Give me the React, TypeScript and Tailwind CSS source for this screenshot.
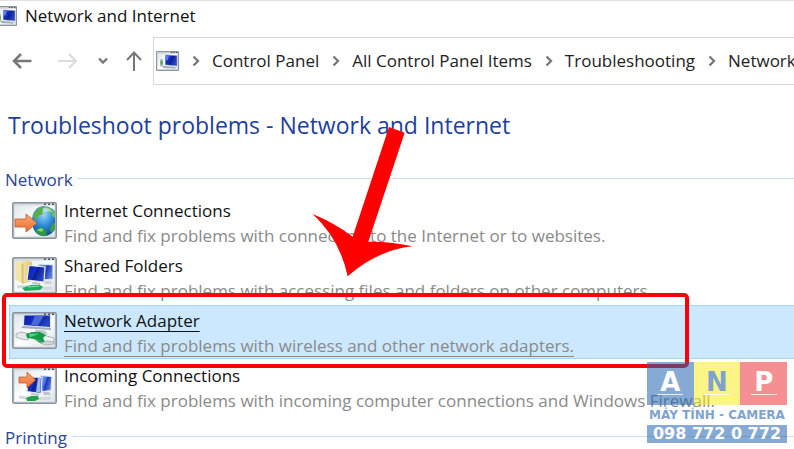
import React from "react";

type IconKind = "internet" | "folders" | "adapter" | "incoming";

interface Troubleshooter {
  title: string;
  description: string;
  icon: IconKind;
  selected?: boolean;
}

const troubleshooters: Troubleshooter[] = [
  {
    title: "Internet Connections",
    description:
      "Find and fix problems with connecting to the Internet or to websites.",
    icon: "internet",
  },
  {
    title: "Shared Folders",
    description:
      "Find and fix problems with accessing files and folders on other computers.",
    icon: "folders",
  },
  {
    title: "Network Adapter",
    description:
      "Find and fix problems with wireless and other network adapters.",
    icon: "adapter",
    selected: true,
  },
  {
    title: "Incoming Connections",
    description:
      "Find and fix problems with incoming computer connections and Windows Firewall.",
    icon: "incoming",
  },
];

const breadcrumbs = [
  "Control Panel",
  "All Control Panel Items",
  "Troubleshooting",
  "Network",
];

// shared gradients, referenced by every icon below
const IconDefs = () => (
  <svg className="absolute h-0 w-0" aria-hidden="true">
    <defs>
      <linearGradient id="pane" x1="0" y1="0" x2="1" y2="1">
        <stop offset="0" stopColor="#dfe6ea" />
        <stop offset="0.5" stopColor="#ffffff" />
        <stop offset="1" stopColor="#dde5ea" />
      </linearGradient>
      <linearGradient id="screen" x1="0" y1="0" x2="1" y2="0.4">
        <stop offset="0" stopColor="#0d1fa0" />
        <stop offset="0.5" stopColor="#1530c8" />
        <stop offset="0.56" stopColor="#0c1c8e" />
        <stop offset="1" stopColor="#2745c8" />
      </linearGradient>
      <linearGradient id="screenLight" x1="0" y1="0" x2="1" y2="0.4">
        <stop offset="0" stopColor="#8fb0f2" />
        <stop offset="0.5" stopColor="#4a70e0" />
        <stop offset="0.6" stopColor="#1c36b8" />
        <stop offset="1" stopColor="#5c7fe0" />
      </linearGradient>
      <linearGradient id="orange" x1="0" y1="0" x2="0" y2="1">
        <stop offset="0" stopColor="#fbaa6c" />
        <stop offset="1" stopColor="#ea6c34" />
      </linearGradient>
      <linearGradient id="folder" x1="0" y1="0" x2="1" y2="0">
        <stop offset="0" stopColor="#f6e8b0" />
        <stop offset="1" stopColor="#dcc578" />
      </linearGradient>
      <radialGradient id="globe" cx="0.5" cy="0.25" r="0.8">
        <stop offset="0" stopColor="#a5dcf8" />
        <stop offset="0.5" stopColor="#2f8fd8" />
        <stop offset="1" stopColor="#0c3f98" />
      </radialGradient>
    </defs>
  </svg>
);

const WindowFrame = () => (
  <>
    <rect x="0.8" y="0.8" width="43.4" height="35.4" rx="1.5" fill="#d3d9dd" stroke="#8a939b" strokeWidth="1.6" />
    <rect x="2.5" y="3.5" width="40" height="31" fill="url(#pane)" />
    <path d="M32 2.2h2M36 2.2h2M40 2.2h2" stroke="#4b555e" strokeWidth="1.4" />
  </>
);

const ItemIcon = ({ kind }: { kind: IconKind }) => (
  <svg viewBox="0 0 45 37" className="h-[37px] w-[45px] shrink-0" aria-hidden="true">
    <WindowFrame />
    {kind === "internet" && (
      <>
        <path d="M32 4c7 0 11 5 11 6v17c-2 4-6 7-11 7-7 0-12-6-12-15S25 4 32 4z" fill="url(#globe)" />
        <path d="M21 14c2-6 6-9 11-10l1 2-2 2 2 2-3 3-3 0-2 4-2 1z" fill="#5cae4c" />
        <path d="M34 5c4 0 7 3 9 6v5l-3-2 0-3-4-1z" fill="#6cbd5c" />
        <path d="M23 28l6-3 6 4-1 5c-5 0-9-2-11-6z" fill="#2c9a38" />
        <path d="M25 28l4-2 3 2-3 2z" fill="#7fd07a" />
        <path d="M40 22l3-1v6l-4 4-1-4z" fill="#3ba246" />
        <path d="M31 6c4-1 7 0 9 4-4-1-7 0-10 2z" fill="#e6f7ff" opacity="0.5" />
        <path d="M3 17h11v-5l11 9-11 9v-5H3z" fill="url(#orange)" stroke="#c15a30" strokeWidth="0.8" />
      </>
    )}
    {kind === "folders" && (
      <>
        <path d="M9 5l4-2 7 2v19l-9 3z" fill="url(#folder)" />
        <path d="M3.5 4l6 2v20l-6-3z" fill="#f3e5a6" />
        <path d="M9.5 6l2 1v20l-2-1z" fill="#d8bf70" />
        <path d="M26 7l15 1v14l-12 1z" fill="url(#screenLight)" stroke="#dfe5ea" strokeWidth="1.2" />
        <path d="M33 24l6 0 1 3-8 0z" fill="#ccd3d8" />
        <path d="M17 8.5l16 1.5-1 15-17-2z" fill="url(#screen)" stroke="#e4e9ee" strokeWidth="1.2" />
        <path d="M21 25l7 1 0 2-9-1z" fill="#b9c2c9" />
        <path d="M5 30c10-2 22 3 35 1" fill="none" stroke="#d3dadd" strokeWidth="3" />
        <path d="M10 31l9-3h9l3 2-3 3-15 1z" fill="#1fae60" />
        <path d="M16 30l11-1" stroke="#84e2a8" strokeWidth="1.2" />
      </>
    )}
    {kind === "adapter" && (
      <>
        <path d="M11 3.5h28v13l-28-2z" fill="#e3e8ed" />
        <path d="M12.5 3.5h25.5l0 11.5-26-2z" fill="url(#screen)" />
        <path d="M23 3.5h9l-6 10-7-0.5z" fill="#4a68d8" />
        <path d="M11 14l28 2v2l-30-2z" fill="#a3adb6" />
        <path d="M23 17.5l10 1 3 4-13-2z" fill="#bcc5cc" />
        <path d="M4 22l5-2 9 2-2 6-7-1-5-2z" fill="#e3e8e8" stroke="#9da6a8" strokeWidth="0.8" />
        <path d="M27 22l15 4v4l-5 2-11-4z" fill="#eef1f1" stroke="#9da6a8" strokeWidth="0.8" />
        <path d="M14 22l6-2 8 0 6 3-3 3 2 4-5 1-6-4-7-1z" fill="#129a48" />
        <path d="M17 22l9 0-8 3zM22 27l7 2" fill="#5ccd84" stroke="#5ccd84" strokeWidth="0.6" />
        <path d="M28 31l7-2 7 1v2l-8 1z" fill="#d0d7d8" stroke="#939c9d" strokeWidth="0.6" />
      </>
    )}
    {kind === "incoming" && (
      <>
        <path d="M28 8.5l12 1-1 14-9 1z" fill="url(#screenLight)" stroke="#dfe5ea" strokeWidth="1.2" />
        <path d="M16 10l14 0.5-1 16-14-2z" fill="url(#screen)" stroke="#e4e9ee" strokeWidth="1.2" />
        <path d="M26 10.5l3 0-1 15-4-0.5z" fill="#9db8f0" />
        <path d="M20 26l7 1 0 2-9-1zM31 25l6 0 2 3-7 0z" fill="#bcc5cb" />
        <path d="M7 30c10 1 20 3 32 1" fill="none" stroke="#d3dadd" strokeWidth="3" />
        <path d="M14 31l5-2h7l1 3-4 2h-8z" fill="#1fa552" />
        <path d="M7 10h8V5l8.500 8-8.500 8v-5H7z" fill="url(#orange)" stroke="#c15a30" strokeWidth="0.8" />
      </>
    )}
  </svg>
);

const MonitorIcon = () => (
  <svg viewBox="0 0 45 39" className="h-5 w-[23px] shrink-0" aria-hidden="true">
    <rect x="1" y="1" width="43" height="37" rx="1" fill="#cbd1d6" stroke="#8d959c" strokeWidth="2" />
    <rect x="3" y="5" width="39" height="30" fill="url(#pane)" />
    <path d="M29 3h3M34 3h3M39 3h3" stroke="#46525e" strokeWidth="2" />
    <path d="M19 8l22 1v20l-23-2z" fill="url(#screen)" stroke="#7d8daa" />
    <path d="M19 8l7 1-3 8-5 4z" fill="#5b79e8" />
    <path d="M14 29l24 2v3l-24-1z" fill="#a3aeb9" />
    <path d="M8 15l6 1v15l-6-1z" fill="#b4bec1" />
    <path d="M9 19l4 1v7l-4-1z" fill="#43a845" />
  </svg>
);

const Crumb = () => (
  <svg viewBox="0 0 8 12" className="mr-3 ml-[13px] h-3 w-2 shrink-0" aria-hidden="true">
    <path d="M1.5 1.5L6 6l-4.5 4.5" fill="none" stroke="#777" strokeWidth="2.3" />
  </svg>
);

const SectionTitle = ({ children }: { children: React.ReactNode }) => (
  <div className="flex h-[26px] items-center gap-1 pl-[5px]">
    <h2 className="pt-[3px] text-[17px] leading-6 text-[#2a4596]">
      {children}
    </h2>
    <div className="h-px flex-1 bg-[#cfdcee]" />
  </div>
);

const Toolbar = () => (
  <div className="flex h-12 items-stretch">
    <div className="flex w-[153px] shrink-0 items-center pl-3">
      <button aria-label="Back" className="mr-[26px]">
        <svg viewBox="0 0 20 16" className="h-4 w-5">
          <path d="M19.5 8H2M9 1L2 8l7 7" fill="none" stroke="#777" strokeWidth="2.500" />
        </svg>
      </button>
      <button aria-label="Forward" className="mr-5" disabled>
        <svg viewBox="0 0 20 16" className="h-4 w-5">
          <path d="M0 8h18M11 1l7 7-7 7" fill="none" stroke="#dcdcdc" strokeWidth="2.200" />
        </svg>
      </button>
      <button aria-label="Recent locations" className="mr-[18px]">
        <svg viewBox="0 0 10 8" className="h-2 w-[10px]">
          <path d="M1 1.5l4 4 4-4" fill="none" stroke="#777" strokeWidth="2.300" />
        </svg>
      </button>
      <button aria-label="Up">
        <svg viewBox="0 0 16 20" className="h-5 w-4">
          <path d="M8 20V2M1 9l7-7.500L15 9" fill="none" stroke="#777" strokeWidth="2" />
        </svg>
      </button>
    </div>
    <nav
      aria-label="Address"
      className="flex min-w-0 flex-1 items-center overflow-hidden border-y border-l border-[#d9d9d9] pl-[2px] whitespace-nowrap"
    >
      <MonitorIcon />
      {breadcrumbs.map((name) => (
        <React.Fragment key={name}>
          <Crumb />
          <a href="#" className="text-[17px] leading-6 text-[#222]">
            {name}
          </a>
        </React.Fragment>
      ))}
    </nav>
  </div>
);

const TroubleshooterRow = ({ item }: { item: Troubleshooter }) => (
  <li className="h-[55px] pl-[9px]">
    <a
      href="#"
      className={
        item.selected
          ? "flex h-[54px] gap-[7px] border border-r-0 border-[#a5d5fa] bg-[#cce8ff] pt-[2px] pl-[2px] *:*:underline *:*:underline-offset-4"
          : "flex h-[54px] gap-[7px] pt-[3px] pl-[3px]"
      }
    >
      <div className="pt-1">
        <ItemIcon kind={item.icon} />
      </div>
      <div className="text-[17px] leading-[25px] whitespace-nowrap">
        <p className="text-[#111]">{item.title}</p>
        <p className="text-[#8a8a8a]">{item.description}</p>
      </div>
    </a>
  </li>
);

const Arrow = () => (
  <svg
    viewBox="0 0 480 540"
    className="pointer-events-none absolute top-[109px] left-[290px] h-[180px] w-[160px]"
    aria-hidden="true"
  >
    <path
      d="M297 51L344 68L235 395Q308 394 368 409Q260 421 173 499Q150 388 68 312Q132 338 188 380Z"
      fill="#ff0000"
    />
  </svg>
);

const Watermark = () => (
  <div className="pointer-events-none absolute top-[361px] right-[7px] w-[140px] font-['DejaVu_Sans'] font-bold">
    <div className="grid h-[43px] grid-cols-3 text-center text-[26px] leading-6 text-white">
      <div className="bg-[#2364ae]/55 pt-2">
        A<div className="mx-auto h-px w-[26px] bg-white/80" />
      </div>
      <div className="bg-[#f5ec20]/55 pt-2 text-[#7fa3cf]">
        N<div className="mx-auto h-px w-[26px] bg-white/80" />
      </div>
      <div className="bg-[#ee3338]/55 pt-2">
        P<div className="mx-auto h-px w-[26px] bg-white/80" />
      </div>
    </div>
    <p className="text-center text-[12px] leading-5 whitespace-nowrap text-[#7fa3cf]">
      MÁY TÍNH - CAMERA
    </p>
    <p className="bg-[#2364ae]/55 text-center text-[16px] leading-[18px] whitespace-nowrap text-white">
      098 772 0 772
    </p>
  </div>
);

const App = () => {
  return (
    <div className="relative h-screen overflow-hidden border-t border-[#e2e2e2] bg-white font-['Open_Sans','Noto_Sans',sans-serif]">
      <IconDefs />
      <header className="flex h-9 items-center gap-2 pb-[6px]">
        <div className="-ml-[6px] flex">
          <MonitorIcon />
        </div>
        <span className="text-[17px] leading-6 text-[#111]">
          Network and Internet
        </span>
      </header>
      <Toolbar />
      <main>
        <h1 className="mt-6 mb-6 pl-2 text-[23px] leading-8 whitespace-nowrap text-[#1c3f9f]">
          Troubleshoot problems - Network and Internet
        </h1>
        <SectionTitle>Network</SectionTitle>
        <ul className="mt-1 mb-2">
          {troubleshooters.map((item) => (
            <TroubleshooterRow key={item.title} item={item} />
          ))}
        </ul>
        <SectionTitle>Printing</SectionTitle>
      </main>
      <div className="pointer-events-none absolute top-[292px] left-[2px] h-[75px] w-[687px] rounded-[5px] border-4 border-[#fb0007]" />
      <Arrow />
      <Watermark />
    </div>
  );
};

export default App;
